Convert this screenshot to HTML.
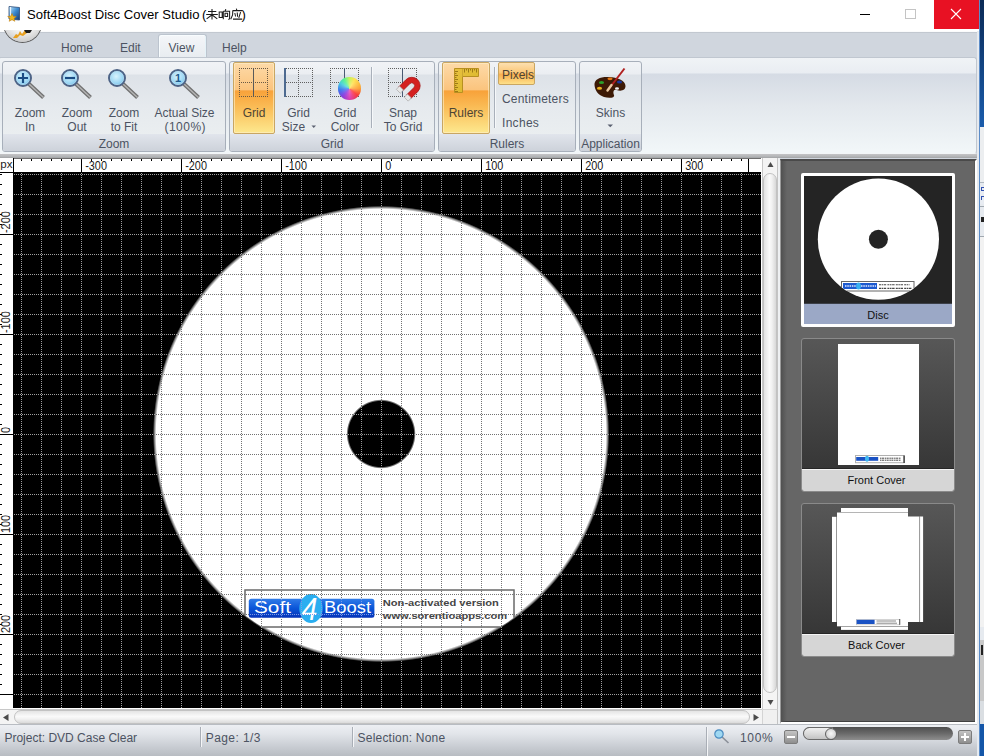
<!DOCTYPE html>
<html><head><meta charset="utf-8">
<style>
*{box-sizing:border-box;margin:0;padding:0}
html,body{width:984px;height:756px;overflow:hidden;background:#d0d6de}
body{position:relative;font-family:"Liberation Sans",sans-serif;font-size:12px;color:#4c5362}
.a{position:absolute}
.t{position:absolute;white-space:nowrap;line-height:14px;margin-top:1px}
</style></head><body>

<!-- right desktop strip -->
<div class="a" style="left:977px;top:0;width:7px;height:756px;background:#e6eaef"></div>
<div class="a" style="left:979px;top:0;width:1px;height:756px;background:#5b8cc8"></div>
<div class="a" style="left:980px;top:0;width:4px;height:127px;background:linear-gradient(#0b2a55,#1a5cac)"></div>
<div class="a" style="left:980px;top:127px;width:4px;height:55px;background:#eceef0"></div>
<div class="a" style="left:980px;top:182px;width:4px;height:1px;background:#b0b8c0"></div>
<div class="a" style="left:980px;top:186px;width:4px;height:18px;background:#e8ecf2;color:#2040a0"></div>
<div class="a" style="left:981px;top:187px;width:3px;height:4px;border:1px solid #3050b0;border-right:none;background:transparent"></div>
<div class="a" style="left:981px;top:196px;width:3px;height:4px;border-left:1px solid #3050b0;border-top:1px solid #3050b0"></div>
<div class="a" style="left:980px;top:206px;width:4px;height:1px;background:#a0a8b0"></div>
<div class="a" style="left:981px;top:217px;width:3px;height:5px;background:#222"></div>
<div class="a" style="left:980px;top:236px;width:4px;height:1px;background:#a0a8b0"></div>
<div class="a" style="left:980px;top:237px;width:4px;height:390px;background:#f2f2f2"></div>
<div class="a" style="left:980px;top:640px;width:4px;height:61px;background:#c8c8c8"></div>
<div class="a" style="left:981px;top:645px;width:2px;height:10px;background:#222"></div>
<div class="a" style="left:980px;top:701px;width:4px;height:23px;background:#dadee2"></div>
<div class="a" style="left:980px;top:724px;width:4px;height:32px;background:#1456a8"></div>
<!-- title bar -->
<div class="a" id="title" style="left:0;top:0;width:979px;height:31px;background:#fff"></div>
<div class="t" style="left:27px;top:6px;font-size:13.1px;color:#000;line-height:18px;margin:0">Soft4Boost Disc Cover Studio</div>
<div class="t" style="left:202px;top:6px;font-size:13.1px;color:#000;line-height:18px;margin:0">(</div>
<div class="t" style="left:241.5px;top:6px;font-size:13.1px;color:#000;line-height:18px;margin:0">)</div>
<div class="a" style="left:860px;top:14px;width:10px;height:1px;background:#000"></div>
<div class="a" style="left:905px;top:9px;width:11px;height:10px;border:1px solid #c4c4c4"></div>
<div class="a" style="left:934px;top:0;width:45px;height:29px;background:#e81123"></div>


<!-- tab row -->
<div class="a" style="left:0;top:31px;width:977px;height:26px;background:#d0d6de;border-top:1px solid #fafbfc;box-shadow:inset 0 1px 0 #c2c8d0"></div>
<!-- app orb (clipped by title) -->
<div class="a" style="left:0;top:29.5px;width:60px;height:16px;overflow:hidden">
 <div class="a" style="left:3.7px;top:-24.2px;width:37px;height:37px;border-radius:50%;background:radial-gradient(circle at 50% 30%,#ffffff 0%,#f6f6f6 45%,#d0d0d0 78%,#a0a0a0 100%);box-shadow:0 0 0 1px #5d5d5d"></div>
 <svg class="a" style="left:10px;top:0" width="24" height="9" viewBox="0 0 24 9">
  <path d="M3 8 L6 4 L8 5 L10 1 L12 4 L15 0 L17 3 L13 6 L10 5 L7 8 Z" fill="#e8a020"/>
  <path d="M14 0 H22 L20 3 H16 Z" fill="#1a1a1a"/>
 </svg>
</div>
<div class="a" style="left:158px;top:34px;width:49px;height:24px;border:1px solid #bcc4ce;border-bottom:none;border-radius:3px 3px 0 0;background:linear-gradient(#f4f6f9,#e8ecf0);box-shadow:inset 1px 1px 0 #f8fcfe,inset -1px 0 0 #e4f2f8"></div>
<div class="t" style="left:61px;top:40px">Home</div>
<div class="t" style="left:120px;top:40px">Edit</div>
<div class="t" style="left:168.5px;top:40px">View</div>
<div class="t" style="left:222px;top:40px">Help</div>

<!-- ribbon body -->
<div class="a" style="left:-2px;top:57px;width:979px;height:97px;border:1px solid #c0c7d0;border-bottom-color:#f2f5f7;border-radius:3px;background:linear-gradient(#f0f3f6 0,#e9edf2 15px,#d5dbe4 16px,#e3e8ed 48px,#f1f6f8 92px)"></div>
<div class="a" style="left:0;top:154px;width:977px;height:4px;background:linear-gradient(#c4c4c6,#b4b6b8 60%,#a0a2a4)"></div>
<div class="a" style="left:0;top:158px;width:761px;height:1px;background:#707070"></div>
<div class="a" style="left:2px;top:61px;width:224px;height:91px;border:1px solid #a7afba;border-radius:3px;overflow:hidden;background:linear-gradient(#f1f3f6 0,#ebeef2 12px,#dde2e8 13px,#e6eaee 45px,#eaeef0 73px)">
 <div class="a" style="left:0;bottom:0;width:100%;height:17px;background:linear-gradient(#e1e5ec,#cdd2da)"></div>
 <div class="t" style="left:0;width:100%;text-align:center;top:74px">Zoom</div>
</div>
<div class="a" style="left:229px;top:61px;width:206px;height:91px;border:1px solid #a7afba;border-radius:3px;overflow:hidden;background:linear-gradient(#f1f3f6 0,#ebeef2 12px,#dde2e8 13px,#e6eaee 45px,#eaeef0 73px)">
 <div class="a" style="left:0;bottom:0;width:100%;height:17px;background:linear-gradient(#e1e5ec,#cdd2da)"></div>
 <div class="t" style="left:0;width:100%;text-align:center;top:74px">Grid</div>
</div>
<div class="a" style="left:438px;top:61px;width:138px;height:91px;border:1px solid #a7afba;border-radius:3px;overflow:hidden;background:linear-gradient(#f1f3f6 0,#ebeef2 12px,#dde2e8 13px,#e6eaee 45px,#eaeef0 73px)">
 <div class="a" style="left:0;bottom:0;width:100%;height:17px;background:linear-gradient(#e1e5ec,#cdd2da)"></div>
 <div class="t" style="left:0;width:100%;text-align:center;top:74px">Rulers</div>
</div>
<div class="a" style="left:579px;top:61px;width:63px;height:91px;border:1px solid #a7afba;border-radius:3px;overflow:hidden;background:linear-gradient(#f1f3f6 0,#ebeef2 12px,#dde2e8 13px,#e6eaee 45px,#eaeef0 73px)">
 <div class="a" style="left:0;bottom:0;width:100%;height:17px;background:linear-gradient(#e1e5ec,#cdd2da)"></div>
 <div class="t" style="left:0;width:100%;text-align:center;top:74px">Application</div>
</div>


<!-- canvas -->
<svg class="a" style="left:13px;top:172px" width="748" height="536" viewBox="0 0 748 536">
 <defs>
  <pattern id="gp" width="20" height="20" patternUnits="userSpaceOnUse"><g fill="#a0a0a0" shape-rendering="crispEdges"><rect x="1" y="2" width="1" height="1"/><rect x="3" y="2" width="1" height="1"/><rect x="5" y="2" width="1" height="1"/><rect x="7" y="2" width="1" height="1"/><rect x="9" y="2" width="1" height="1"/><rect x="11" y="2" width="1" height="1"/><rect x="13" y="2" width="1" height="1"/><rect x="15" y="2" width="1" height="1"/><rect x="17" y="2" width="1" height="1"/><rect x="19" y="2" width="1" height="1"/><rect x="8" y="1" width="1" height="1"/><rect x="8" y="3" width="1" height="1"/><rect x="8" y="5" width="1" height="1"/><rect x="8" y="7" width="1" height="1"/><rect x="8" y="9" width="1" height="1"/><rect x="8" y="11" width="1" height="1"/><rect x="8" y="13" width="1" height="1"/><rect x="8" y="15" width="1" height="1"/><rect x="8" y="17" width="1" height="1"/><rect x="8" y="19" width="1" height="1"/></g></pattern>
  <pattern id="gd" width="20" height="20" patternUnits="userSpaceOnUse"><g fill="#727272" shape-rendering="crispEdges"><rect x="1" y="2" width="1" height="1"/><rect x="3" y="2" width="1" height="1"/><rect x="5" y="2" width="1" height="1"/><rect x="7" y="2" width="1" height="1"/><rect x="9" y="2" width="1" height="1"/><rect x="11" y="2" width="1" height="1"/><rect x="13" y="2" width="1" height="1"/><rect x="15" y="2" width="1" height="1"/><rect x="17" y="2" width="1" height="1"/><rect x="19" y="2" width="1" height="1"/><rect x="8" y="1" width="1" height="1"/><rect x="8" y="3" width="1" height="1"/><rect x="8" y="5" width="1" height="1"/><rect x="8" y="7" width="1" height="1"/><rect x="8" y="9" width="1" height="1"/><rect x="8" y="11" width="1" height="1"/><rect x="8" y="13" width="1" height="1"/><rect x="8" y="15" width="1" height="1"/><rect x="8" y="17" width="1" height="1"/><rect x="8" y="19" width="1" height="1"/></g></pattern>
  <pattern id="gb" width="20" height="20" patternUnits="userSpaceOnUse"><g fill="#7c9ae6" shape-rendering="crispEdges"><rect x="1" y="2" width="1" height="1"/><rect x="3" y="2" width="1" height="1"/><rect x="5" y="2" width="1" height="1"/><rect x="7" y="2" width="1" height="1"/><rect x="9" y="2" width="1" height="1"/><rect x="11" y="2" width="1" height="1"/><rect x="13" y="2" width="1" height="1"/><rect x="15" y="2" width="1" height="1"/><rect x="17" y="2" width="1" height="1"/><rect x="19" y="2" width="1" height="1"/><rect x="8" y="1" width="1" height="1"/><rect x="8" y="3" width="1" height="1"/><rect x="8" y="5" width="1" height="1"/><rect x="8" y="7" width="1" height="1"/><rect x="8" y="9" width="1" height="1"/><rect x="8" y="11" width="1" height="1"/><rect x="8" y="13" width="1" height="1"/><rect x="8" y="15" width="1" height="1"/><rect x="8" y="17" width="1" height="1"/><rect x="8" y="19" width="1" height="1"/></g></pattern>
  <clipPath id="ring"><path clip-rule="evenodd" d="M141.4 262 A226.7 226.7 0 1 0 594.8 262 A226.7 226.7 0 1 0 141.4 262 Z M334.5 262 A33.6 33.6 0 1 0 401.7 262 A33.6 33.6 0 1 0 334.5 262 Z"/></clipPath>
  <clipPath id="outside"><path clip-rule="evenodd" d="M0 0 H748 V536 H0 Z M141.4 262 A226.7 226.7 0 1 0 594.8 262 A226.7 226.7 0 1 0 141.4 262 Z M334.5 262 A33.6 33.6 0 1 0 401.7 262 A33.6 33.6 0 1 0 334.5 262 Z"/></clipPath>
  <clipPath id="bn"><rect x="235.8" y="426.8" width="125.6" height="19"/></clipPath>
  <clipPath id="dc"><circle cx="368.1" cy="262" r="226.7"/></clipPath>
  <linearGradient id="lb" x1="0" y1="0" x2="0" y2="1"><stop offset="0" stop-color="#2f7be8"/><stop offset="0.5" stop-color="#0a55d8"/><stop offset="1" stop-color="#0633b8"/></linearGradient>
 </defs>
 <rect width="748" height="536" fill="#000"/>
 <radialGradient id="dg" gradientUnits="userSpaceOnUse" cx="368.1" cy="262" r="228.2"><stop offset="0.9852" stop-color="#fff"/><stop offset="0.993" stop-color="#888"/><stop offset="1" stop-color="#000"/></radialGradient>
 <radialGradient id="hg" gradientUnits="userSpaceOnUse" cx="368.1" cy="262" r="34.7"><stop offset="0.94" stop-color="#000"/><stop offset="0.97" stop-color="#777"/><stop offset="1" stop-color="#fff"/></radialGradient>
 <circle cx="368.1" cy="262" r="228.2" fill="url(#dg)"/>
 <g clip-path="url(#dc)">
  <rect x="232" y="418" width="269" height="37" fill="#fff" stroke="#6a6a6a" stroke-width="1.5"/>
  <rect x="235.8" y="426.8" width="125.6" height="19" rx="2.5" fill="url(#lb)"/>
  <ellipse cx="298" cy="436.5" rx="11.7" ry="14.5" fill="#2aaef0"/>
  <text x="241" y="440.8" font-family="Liberation Sans" font-size="16.8" fill="#fff" textLength="37" lengthAdjust="spacingAndGlyphs">Soft</text>
  <text x="288.5" y="448.4" font-family="Liberation Sans" font-size="31" font-style="italic" fill="#fff" textLength="16" lengthAdjust="spacingAndGlyphs">4</text>
  <text x="311" y="440.8" font-family="Liberation Sans" font-size="16.8" fill="#fff" textLength="47" lengthAdjust="spacingAndGlyphs">Boost</text>
  <text x="369.8" y="433.9" font-family="Liberation Sans" font-size="9.6" font-weight="bold" fill="#444" textLength="116" lengthAdjust="spacingAndGlyphs">Non-activated version</text>
  <text x="369.8" y="447.4" font-family="Liberation Sans" font-size="9.6" font-weight="bold" fill="#444" textLength="124.3" lengthAdjust="spacingAndGlyphs">www.sorentioapps.com</text>
 </g>
 <circle cx="368.1" cy="262" r="34.7" fill="url(#hg)"/>
 <rect width="748" height="536" fill="url(#gp)" clip-path="url(#outside)"/>
 <rect width="748" height="536" fill="url(#gd)" clip-path="url(#ring)"/>
 <rect x="235" y="426" width="127" height="21" fill="url(#gb)" clip-path="url(#bn)"/>
</svg>
<svg class="a" style="left:0;top:159px" width="761" height="13" viewBox="0 0 761 13">
 <rect width="761" height="13" fill="#fff"/>
 <g fill="#000" shape-rendering="crispEdges"><rect x="21" y="0" width="1" height="2"/><rect x="31" y="0" width="1" height="2"/><rect x="41" y="0" width="1" height="2"/><rect x="51" y="0" width="1" height="2"/><rect x="61" y="0" width="1" height="2"/><rect x="71" y="0" width="1" height="2"/><rect x="81" y="0" width="1" height="13"/><rect x="91" y="0" width="1" height="2"/><rect x="101" y="0" width="1" height="2"/><rect x="111" y="0" width="1" height="2"/><rect x="121" y="0" width="1" height="2"/><rect x="131" y="0" width="1" height="2"/><rect x="141" y="0" width="1" height="2"/><rect x="151" y="0" width="1" height="2"/><rect x="161" y="0" width="1" height="2"/><rect x="171" y="0" width="1" height="2"/><rect x="181" y="0" width="1" height="13"/><rect x="191" y="0" width="1" height="2"/><rect x="201" y="0" width="1" height="2"/><rect x="211" y="0" width="1" height="2"/><rect x="221" y="0" width="1" height="2"/><rect x="231" y="0" width="1" height="2"/><rect x="241" y="0" width="1" height="2"/><rect x="251" y="0" width="1" height="2"/><rect x="261" y="0" width="1" height="2"/><rect x="271" y="0" width="1" height="2"/><rect x="281" y="0" width="1" height="13"/><rect x="291" y="0" width="1" height="2"/><rect x="301" y="0" width="1" height="2"/><rect x="311" y="0" width="1" height="2"/><rect x="321" y="0" width="1" height="2"/><rect x="331" y="0" width="1" height="2"/><rect x="341" y="0" width="1" height="2"/><rect x="351" y="0" width="1" height="2"/><rect x="361" y="0" width="1" height="2"/><rect x="371" y="0" width="1" height="2"/><rect x="381" y="0" width="1" height="13"/><rect x="391" y="0" width="1" height="2"/><rect x="401" y="0" width="1" height="2"/><rect x="411" y="0" width="1" height="2"/><rect x="421" y="0" width="1" height="2"/><rect x="431" y="0" width="1" height="2"/><rect x="441" y="0" width="1" height="2"/><rect x="451" y="0" width="1" height="2"/><rect x="461" y="0" width="1" height="2"/><rect x="471" y="0" width="1" height="2"/><rect x="481" y="0" width="1" height="13"/><rect x="491" y="0" width="1" height="2"/><rect x="501" y="0" width="1" height="2"/><rect x="511" y="0" width="1" height="2"/><rect x="521" y="0" width="1" height="2"/><rect x="531" y="0" width="1" height="2"/><rect x="541" y="0" width="1" height="2"/><rect x="551" y="0" width="1" height="2"/><rect x="561" y="0" width="1" height="2"/><rect x="571" y="0" width="1" height="2"/><rect x="581" y="0" width="1" height="13"/><rect x="591" y="0" width="1" height="2"/><rect x="601" y="0" width="1" height="2"/><rect x="611" y="0" width="1" height="2"/><rect x="621" y="0" width="1" height="2"/><rect x="631" y="0" width="1" height="2"/><rect x="641" y="0" width="1" height="2"/><rect x="651" y="0" width="1" height="2"/><rect x="661" y="0" width="1" height="2"/><rect x="671" y="0" width="1" height="2"/><rect x="681" y="0" width="1" height="13"/><rect x="691" y="0" width="1" height="2"/><rect x="701" y="0" width="1" height="2"/><rect x="711" y="0" width="1" height="2"/><rect x="721" y="0" width="1" height="2"/><rect x="731" y="0" width="1" height="2"/><rect x="741" y="0" width="1" height="2"/><rect x="748" y="0" width="1" height="13"/></g>
 <g font-family="Liberation Sans" font-size="12.5" fill="#1a1a1a"><text transform="translate(85.2,10.9) scale(0.87,1)">-300</text><text transform="translate(185.2,10.9) scale(0.87,1)">-200</text><text transform="translate(285.2,10.9) scale(0.87,1)">-100</text><text transform="translate(385.2,10.9) scale(0.87,1)">0</text><text transform="translate(485.2,10.9) scale(0.87,1)">100</text><text transform="translate(585.2,10.9) scale(0.87,1)">200</text><text transform="translate(685.2,10.9) scale(0.87,1)">300</text></g>
</svg><svg class="a" style="left:0;top:172px" width="13" height="536" viewBox="0 0 13 536">
 <rect width="13" height="536" fill="#fff"/>
 <g fill="#000" shape-rendering="crispEdges"><rect x="0" y="2" width="2" height="1"/><rect x="0" y="12" width="2" height="1"/><rect x="0" y="22" width="2" height="1"/><rect x="0" y="32" width="2" height="1"/><rect x="0" y="42" width="2" height="1"/><rect x="0" y="52" width="2" height="1"/><rect x="0" y="62" width="13" height="1"/><rect x="0" y="72" width="2" height="1"/><rect x="0" y="82" width="2" height="1"/><rect x="0" y="92" width="2" height="1"/><rect x="0" y="102" width="2" height="1"/><rect x="0" y="112" width="2" height="1"/><rect x="0" y="122" width="2" height="1"/><rect x="0" y="132" width="2" height="1"/><rect x="0" y="142" width="2" height="1"/><rect x="0" y="152" width="2" height="1"/><rect x="0" y="162" width="13" height="1"/><rect x="0" y="172" width="2" height="1"/><rect x="0" y="182" width="2" height="1"/><rect x="0" y="192" width="2" height="1"/><rect x="0" y="202" width="2" height="1"/><rect x="0" y="212" width="2" height="1"/><rect x="0" y="222" width="2" height="1"/><rect x="0" y="232" width="2" height="1"/><rect x="0" y="242" width="2" height="1"/><rect x="0" y="252" width="2" height="1"/><rect x="0" y="262" width="13" height="1"/><rect x="0" y="272" width="2" height="1"/><rect x="0" y="282" width="2" height="1"/><rect x="0" y="292" width="2" height="1"/><rect x="0" y="302" width="2" height="1"/><rect x="0" y="312" width="2" height="1"/><rect x="0" y="322" width="2" height="1"/><rect x="0" y="332" width="2" height="1"/><rect x="0" y="342" width="2" height="1"/><rect x="0" y="352" width="2" height="1"/><rect x="0" y="362" width="13" height="1"/><rect x="0" y="372" width="2" height="1"/><rect x="0" y="382" width="2" height="1"/><rect x="0" y="392" width="2" height="1"/><rect x="0" y="402" width="2" height="1"/><rect x="0" y="412" width="2" height="1"/><rect x="0" y="422" width="2" height="1"/><rect x="0" y="432" width="2" height="1"/><rect x="0" y="442" width="2" height="1"/><rect x="0" y="452" width="2" height="1"/><rect x="0" y="462" width="13" height="1"/><rect x="0" y="472" width="2" height="1"/><rect x="0" y="482" width="2" height="1"/><rect x="0" y="492" width="2" height="1"/><rect x="0" y="502" width="2" height="1"/><rect x="0" y="512" width="2" height="1"/><rect x="0" y="522" width="2" height="1"/><rect x="0" y="522" width="13" height="1"/></g>
 <g font-family="Liberation Sans" font-size="12.5" fill="#1a1a1a"><text transform="translate(10.2,61) rotate(-90) scale(0.87,1)">-200</text><text transform="translate(10.2,161) rotate(-90) scale(0.87,1)">-100</text><text transform="translate(10.2,261) rotate(-90) scale(0.87,1)">0</text><text transform="translate(10.2,361) rotate(-90) scale(0.87,1)">100</text><text transform="translate(10.2,461) rotate(-90) scale(0.87,1)">200</text></g>
</svg>
<div class="a" style="left:0;top:158px;width:14px;height:15px;background:#fff;border-right:1px solid #000;border-bottom:1px solid #000"></div>
<div class="t" style="left:0.3px;top:156px;font-size:11.5px;color:#222;line-height:14px">px</div>


<!-- vertical scrollbar -->
<div class="a" style="left:761px;top:158px;width:17px;height:551px;background:#f4f4f4;border-left:1px solid #ffffff;border-right:1px solid #c4c4c4;box-shadow:inset 1px 0 0 #c8c8c8"></div>
<div class="a" style="left:763px;top:173px;width:14px;height:520px;border-radius:7px;border:1px solid #c2c2c2;background:linear-gradient(90deg,#e2e2e2,#fafafa 45%,#f2f2f2 65%,#d8d8d8)"></div>
<svg class="a" style="left:765px;top:161px" width="11" height="8"><path d="M2.5 6 L5.5 1 L8.5 6 Z" fill="#4a4a4a"/></svg>
<svg class="a" style="left:765px;top:699px" width="11" height="8"><path d="M2.5 1 L5.5 6 L8.5 1 Z" fill="#4a4a4a"/></svg>
<!-- horizontal scrollbar -->
<div class="a" style="left:0;top:708px;width:762px;height:17px;background:#f4f4f4;border-top:1px solid #ffffff;border-bottom:1px solid #b8b8b8;box-shadow:inset 0 1px 0 #c8c8c8"></div>
<div class="a" style="left:14px;top:710px;width:736px;height:14px;border-radius:7px;border:1px solid #c2c2c2;background:linear-gradient(#e4e4e4,#fafafa 45%,#f2f2f2 65%,#dadada)"></div>
<svg class="a" style="left:2px;top:712px" width="8" height="11"><path d="M6.5 2 L1 5.5 L6.5 9 Z" fill="#4a4a4a"/></svg>
<svg class="a" style="left:752px;top:712px" width="8" height="11"><path d="M1.5 2 L7 5.5 L1.5 9 Z" fill="#4a4a4a"/></svg>
<div class="a" style="left:762px;top:709px;width:16px;height:16px;background:#f0f0f0;border:1px solid #d4d4d4;border-right-color:#c4c4c4"></div>
<!-- gap -->
<div class="a" style="left:778px;top:158px;width:2px;height:567px;background:#eef0f2"></div>
<!-- right panel -->
<div class="a" style="left:780px;top:159px;width:197px;height:565px;background:#666;border-left:1px solid #9a9a9a;border-top:2px solid #4a4a4a;border-right:2px solid #fff;border-bottom:2px solid #fff;box-shadow:inset 0 -1px 0 #404040, inset -1px 0 0 #5a5a5a"></div>
<div class="a" style="left:781px;top:161px;width:6px;height:561px;background:linear-gradient(90deg,#505050,rgba(102,102,102,0))"></div>
<!-- status bar -->
<div class="a" style="left:0;top:724px;width:977px;height:32px;background:linear-gradient(#eef0f4 0,#e2e5ea 30%,#c8ccd2 72%,#b8bcc2)"></div>
<div class="a" style="left:0;top:724px;width:977px;height:1px;background:#b8bcc2"></div>
<div class="a" style="left:200px;top:727px;width:1px;height:20px;background:#a9aeb6;box-shadow:1px 0 0 #f4f5f7"></div>
<div class="a" style="left:352px;top:727px;width:1px;height:20px;background:#a9aeb6;box-shadow:1px 0 0 #f4f5f7"></div>
<div class="a" style="left:706px;top:727px;width:1px;height:29px;background:#a9aeb6;box-shadow:1px 0 0 #f4f5f7"></div>
<div class="t" style="left:4.4px;top:730px">Project: DVD Case Clear</div>
<div class="t" style="left:205.8px;top:730px;letter-spacing:0.4px">Page: 1/3</div>
<div class="t" style="left:357.6px;top:730px;letter-spacing:0.2px">Selection: None</div>
<div class="t" style="left:740px;top:730px;letter-spacing:0.7px">100%</div>


<!-- right panel cards -->
<div class="a" style="left:801px;top:173px;width:154px;height:154px;background:#fff;border-radius:2px"></div>
<svg class="a" style="left:804px;top:176px" width="148" height="128" viewBox="804 176 148 128">
 <rect x="804" y="176" width="148" height="128" fill="#242424"/>
 <defs><clipPath id="tc"><circle cx="878.4" cy="239.2" r="60.6"/></clipPath></defs>
 <circle cx="878.4" cy="239.2" r="60.6" fill="#fff"/>
 <circle cx="878.4" cy="239.2" r="9.5" fill="#242424"/>
 <g clip-path="url(#tc)">
  <rect x="841.5" y="281.5" width="72.5" height="9.5" fill="#fff" stroke="#666" stroke-width="1"/>
  <rect x="843" y="283" width="34" height="6" fill="#1d5ad0"/>
  <ellipse cx="858.5" cy="286" rx="2.4" ry="3.6" fill="#3ab0f0"/>
  <g stroke="#dfe8ff" stroke-width="1.3" stroke-dasharray="1.5 0.8"><path d="M845 286 H856 M861 286 H876"/></g>
  <g stroke="#444" stroke-width="1.1" stroke-dasharray="2 0.6 1.5 0.6 2.5 1.2"><path d="M879 284.8 H909.5 M879 288.4 H912"/></g>
 </g>
</svg>
<div class="a" style="left:804px;top:303px;width:148px;height:21px;background:#9ba8c6;border-top:1px solid #3c4048"></div>
<div class="t" style="left:804px;top:307px;width:148px;text-align:center;color:#111;font-size:11px">Disc</div>

<div class="a" style="left:801px;top:338px;width:154px;height:154px;border:1px solid #8a8a8a;border-radius:3px;overflow:hidden;background:linear-gradient(#575757,#333 95%)">
 <div class="a" style="left:35.5px;top:4.5px;width:81.5px;height:121.3px;background:#fff">
  <svg class="a" style="left:17.5px;top:111.5px" width="50" height="9" viewBox="0 0 50 9">
   <rect x="0.5" y="0.5" width="48.5" height="7.2" fill="#fff" stroke="#b0b0b0" stroke-width="1"/>
   <rect x="48.5" y="0.5" width="1.2" height="7.5" fill="#222"/>
   <rect x="1.2" y="2" width="22" height="3.8" fill="#1a52c4"/>
   <ellipse cx="12" cy="3.8" rx="2" ry="3" fill="#40b8f0"/>
   <g stroke="#333" stroke-width="0.9" stroke-dasharray="1.5 0.5 2 0.7"><path d="M25 3.2 H46 M25 5.2 H46"/></g>
  </svg>
 </div>
 <div class="a" style="left:0;top:129px;width:100%;height:25px;background:#d6d6d6;border-top:1px solid #262626;box-shadow:inset 0 1px 0 #f4f4f4"></div>
</div>
<div class="t" style="left:799.5px;top:472px;width:154px;text-align:center;color:#111;font-size:11px">Front Cover</div>

<div class="a" style="left:801px;top:503px;width:154px;height:154px;border:1px solid #8a8a8a;border-radius:3px;overflow:hidden;background:linear-gradient(#575757,#333 95%)">
 <svg class="a" style="left:-1px;top:-1px" width="154" height="154" viewBox="801 503 154 154">
  <g fill="#fff">
   <rect x="837" y="512.5" width="71" height="113.5"/>
   <rect x="908" y="516.5" width="11.3" height="105.5"/>
   <rect x="920" y="516.5" width="3.1" height="105.5"/>
   <rect x="832" y="516.8" width="4.2" height="105.2"/>
   <rect x="841" y="508" width="67" height="4.5"/>
   <rect x="841" y="626.5" width="67" height="3.4"/>
  </g>
  <g fill="#a8a8a8">
   <rect x="919.3" y="516.5" width="0.8" height="105.5"/>
   <rect x="836.2" y="516.8" width="0.7" height="105.2"/>
   <rect x="837" y="512.2" width="71" height="0.7"/>
   <rect x="837" y="626" width="71" height="0.6"/>
  </g>
  <rect x="856.3" y="619.3" width="43.5" height="5.5" fill="#fff" stroke="#b8b8b8" stroke-width="0.6"/>
  <rect x="856.6" y="619.8" width="18" height="4.2" fill="#1a52c4"/>
  <rect x="899.3" y="619" width="0.9" height="5.8" fill="#444"/>
  <g stroke="#555" stroke-width="0.7"><path d="M876.5 621 H896 M876.5 623.2 H897"/></g>
 </svg>
 <div class="a" style="left:0;top:129px;width:100%;height:25px;background:#d6d6d6;border-top:1px solid #262626;box-shadow:inset 0 1px 0 #f4f4f4"></div>
</div>
<div class="t" style="left:799.5px;top:637px;width:154px;text-align:center;color:#111;font-size:11px">Back Cover</div>


<!-- zoom group buttons -->
<svg class="a" style="left:13px;top:68px" width="34" height="34" viewBox="0 0 34 34">
 <defs><radialGradient id="lg13" cx="0.45" cy="0.4" r="0.6"><stop offset="0" stop-color="#d8f3fd"/><stop offset="0.7" stop-color="#9ad6f4"/><stop offset="1" stop-color="#6cb6e4"/></radialGradient></defs>
 <line x1="15.5" y1="15.5" x2="30.5" y2="29.5" stroke="#707070" stroke-width="4"/>
 <line x1="15.5" y1="15.5" x2="30.5" y2="29.5" stroke="#b4b4b4" stroke-width="1.5"/>
 <circle cx="10" cy="10" r="8" fill="url(#lg13)" stroke="#4d6386" stroke-width="2"/>
 <circle cx="10" cy="10" r="6.6" fill="none" stroke="#b9dcf0" stroke-width="0.8" opacity="0.8"/>
 <path d="M5 10 H15 M10 5 V15" stroke="#1a4c84" stroke-width="2.2"/>
</svg>
<svg class="a" style="left:60px;top:68px" width="34" height="34" viewBox="0 0 34 34">
 <defs><radialGradient id="lg60" cx="0.45" cy="0.4" r="0.6"><stop offset="0" stop-color="#d8f3fd"/><stop offset="0.7" stop-color="#9ad6f4"/><stop offset="1" stop-color="#6cb6e4"/></radialGradient></defs>
 <line x1="15.5" y1="15.5" x2="30.5" y2="29.5" stroke="#707070" stroke-width="4"/>
 <line x1="15.5" y1="15.5" x2="30.5" y2="29.5" stroke="#b4b4b4" stroke-width="1.5"/>
 <circle cx="10" cy="10" r="8" fill="url(#lg60)" stroke="#4d6386" stroke-width="2"/>
 <circle cx="10" cy="10" r="6.6" fill="none" stroke="#b9dcf0" stroke-width="0.8" opacity="0.8"/>
 <path d="M5 10 H15" stroke="#1a4c84" stroke-width="2.2"/>
</svg>
<svg class="a" style="left:107px;top:68px" width="34" height="34" viewBox="0 0 34 34">
 <defs><radialGradient id="lg107" cx="0.45" cy="0.4" r="0.6"><stop offset="0" stop-color="#d8f3fd"/><stop offset="0.7" stop-color="#9ad6f4"/><stop offset="1" stop-color="#6cb6e4"/></radialGradient></defs>
 <line x1="15.5" y1="15.5" x2="30.5" y2="29.5" stroke="#707070" stroke-width="4"/>
 <line x1="15.5" y1="15.5" x2="30.5" y2="29.5" stroke="#b4b4b4" stroke-width="1.5"/>
 <circle cx="10" cy="10" r="8" fill="url(#lg107)" stroke="#4d6386" stroke-width="2"/>
 <circle cx="10" cy="10" r="6.6" fill="none" stroke="#b9dcf0" stroke-width="0.8" opacity="0.8"/>
 
</svg>
<svg class="a" style="left:168px;top:68px" width="34" height="34" viewBox="0 0 34 34">
 <defs><radialGradient id="lg168" cx="0.45" cy="0.4" r="0.6"><stop offset="0" stop-color="#d8f3fd"/><stop offset="0.7" stop-color="#9ad6f4"/><stop offset="1" stop-color="#6cb6e4"/></radialGradient></defs>
 <line x1="15.5" y1="15.5" x2="30.5" y2="29.5" stroke="#707070" stroke-width="4"/>
 <line x1="15.5" y1="15.5" x2="30.5" y2="29.5" stroke="#b4b4b4" stroke-width="1.5"/>
 <circle cx="10" cy="10" r="8" fill="url(#lg168)" stroke="#4d6386" stroke-width="2"/>
 <circle cx="10" cy="10" r="6.6" fill="none" stroke="#b9dcf0" stroke-width="0.8" opacity="0.8"/>
 <text x="10" y="14.2" text-anchor="middle" font-family="Liberation Sans" font-weight="bold" font-size="11" fill="#1f5a8c">1</text>
</svg>
<div class="t" style="left:3px;width:54px;text-align:center;top:105px">Zoom<br>In</div>
<div class="t" style="left:50px;width:54px;text-align:center;top:105px">Zoom<br>Out</div>
<div class="t" style="left:97px;width:54px;text-align:center;top:105px">Zoom<br>to Fit</div>
<div class="t" style="left:149.5px;width:70px;text-align:center;top:105px">Actual Size<br><span style="letter-spacing:0.5px;margin-left:1.5px">(100%)</span></div>

<!-- grid group -->
<div class="a" style="left:233px;top:62px;width:42px;height:72px;background:linear-gradient(#fddaa8 0%,#fbc47e 38%,#f8a23a 40%,#fabb55 62%,#fde88e 100%);border:1px solid #c9a662;border-radius:2px;box-shadow:inset 0 0 0 1px rgba(255,240,200,0.6)"></div>
<svg class="a" style="left:230px;top:60px" width="210" height="44" viewBox="230 60 210 44">
 <g stroke="#6a5a44" stroke-width="1" stroke-dasharray="1 1" fill="none" shape-rendering="crispEdges"><path d="M239 68.5 H268 M239 96.5 H268 M239 82.5 H268 M239.5 68 V97 M267.5 68 V97"/></g>
 <rect x="253" y="68" width="1" height="29" fill="#5a5a5a" shape-rendering="crispEdges"/>
 <g stroke="#5e5e5e" stroke-width="1" stroke-dasharray="1 1" fill="none" shape-rendering="crispEdges"><path d="M284 68.5 H313 M284 96.5 H313 M284 82.5 H313 M284.5 68 V97 M312.5 68 V97"/></g>
 <path d="M298.5 68 V97" stroke="#5e5e5e" stroke-width="1" stroke-dasharray="1 1" shape-rendering="crispEdges"/>
 <rect x="284" y="68" width="2" height="29" fill="#4d6a90" shape-rendering="crispEdges"/>
 <g stroke="#5e5e5e" stroke-width="1" stroke-dasharray="1 1" fill="none" shape-rendering="crispEdges"><path d="M330 68.5 H359 M330 96.5 H359 M330 82.5 H359 M330.5 68 V97 M358.5 68 V97"/></g>
 <rect x="344" y="68" width="1" height="14" fill="#4a5a72" shape-rendering="crispEdges"/>
 <g stroke="#5e5e5e" stroke-width="1" stroke-dasharray="1 1" fill="none" shape-rendering="crispEdges"><path d="M388 68.5 H417 M388 96.5 H417 M388 82.5 H417 M388.5 68 V97 M416.5 68 V97"/></g>
 <rect x="402" y="68" width="1" height="29" fill="#4a5a72" shape-rendering="crispEdges"/>
</svg>
<div class="a" style="left:338.4px;top:77px;width:22.6px;height:22.6px;border-radius:50%;background:conic-gradient(#c0f040 0deg,#ffe040 30deg,#ffa030 90deg,#ff3838 130deg,#e040b8 180deg,#8838e0 220deg,#2c6cf0 262deg,#30c8d8 300deg,#40f080 330deg,#c0f040 360deg)"></div>
<div class="a" style="left:338.4px;top:77px;width:22.6px;height:22.6px;border-radius:50%;background:radial-gradient(circle at 45% 38%,rgba(255,255,255,0.35),rgba(255,255,255,0.1) 45%,rgba(0,0,0,0.04) 75%,rgba(0,0,0,0.28))"></div>
<svg class="a" style="left:394px;top:76px;overflow:visible" width="28" height="26" viewBox="0 0 28 26">
 <g transform="translate(17 10.5) scale(1.12) translate(-14 -12) rotate(-135 14 12)">
  <path d="M6.5 4 V13 A7.5 7.5 0 0 0 21.5 13 V4 H16.5 V13 A2.5 2.5 0 0 1 11.5 13 V4 Z" fill="#d42020" stroke="#a01010" stroke-width="0.6"/>
  <rect x="6.5" y="1" width="5" height="4" fill="#e8e8e8" stroke="#999" stroke-width="0.5"/>
  <rect x="16.5" y="1" width="5" height="4" fill="#e8e8e8" stroke="#999" stroke-width="0.5"/>
 </g>
</svg>
<div class="a" style="left:371px;top:67px;width:1px;height:61px;background:#a9b0ba;box-shadow:1px 0 0 #f6f8fa"></div>
<div class="t" style="left:233px;width:42px;text-align:center;top:105px;color:#4d4434">Grid</div>
<div class="t" style="left:271.5px;width:54px;text-align:center;top:105px">Grid<br>Size &nbsp;&nbsp;</div>
<svg class="a" style="left:311px;top:125px" width="6" height="4"><path d="M0.5 0.5 H5 L2.75 3 Z" fill="#5a6070"/></svg>
<div class="t" style="left:318px;width:54px;text-align:center;top:105px">Grid<br>Color</div>
<div class="t" style="left:373px;width:60px;text-align:center;top:105px">Snap<br>To Grid</div>

<!-- rulers group -->
<div class="a" style="left:442px;top:62px;width:48px;height:72px;background:linear-gradient(#fddaa8 0%,#fbc47e 38%,#f8a23a 40%,#fabb55 62%,#fde88e 100%);border:1px solid #c9a662;border-radius:2px;box-shadow:inset 0 0 0 1px rgba(255,240,200,0.6)"></div>
<div class="a" style="left:498px;top:62px;width:37px;height:23px;background:linear-gradient(#fde0b0,#fbc778 45%,#f9b050 55%,#fde08a);border:1px solid #c9a662;border-radius:2px"></div>
<svg class="a" style="left:454px;top:68px" width="26" height="25" viewBox="0 0 26 25">
 <defs><linearGradient id="rg" x1="0" y1="0" x2="1" y2="1"><stop offset="0" stop-color="#e8c040"/><stop offset="1" stop-color="#d8b828"/></linearGradient></defs>
 <path d="M0.5 0.5 H24.5 V8.5 H8.5 V24.5 H0.5 Z" fill="url(#rg)" stroke="#b89020" stroke-width="1"/>
 <path d="M8.5 1 V8.5" stroke="#c8a030" stroke-width="0.8"/>
 <g stroke="#8a6810" stroke-width="0.8" fill="none"><path d="M1 3.5 H4M1 5.5 H2.5M1 7.5 H4M1 9.5 H2.5M1 11.5 H4M1 13.5 H2.5M1 15.5 H4M1 17.5 H2.5M1 19.5 H4M1 21.5 H2.5M1 23.5 H4M10.5 1 V4.5M12.5 1 V2.5M14.5 1 V4.5M16.5 1 V2.5M18.5 1 V4.5M20.5 1 V2.5M22.5 1 V4.5"/></g>
</svg>
<div class="a" style="left:494px;top:67px;width:1px;height:61px;background:#a9b0ba;box-shadow:1px 0 0 #f6f8fa"></div>
<div class="t" style="left:442px;width:48px;text-align:center;top:105px;color:#4d4434">Rulers</div>
<div class="t" style="left:502px;top:66.8px;color:#4d4434">Pixels</div>
<div class="t" style="left:502px;top:90.6px;letter-spacing:0.2px">Centimeters</div>
<div class="t" style="left:502px;top:114.8px;letter-spacing:0.3px">Inches</div>

<!-- application group -->
<svg class="a" style="left:592px;top:66px" width="36" height="34" viewBox="0 0 36 34">
 <path d="M2.5 19 C2 13 9 10.5 17 11 C25 11.5 33.5 14 33.5 20 C33.5 24.5 29 25.5 24.5 24 C21 23 21 27 22 29 C23 32 17 32.5 12 31 C6 29 2.8 24 2.5 19 Z" fill="#3d1a06"/>
 <ellipse cx="9.5" cy="16.5" rx="2.6" ry="1.5" fill="#2aa02a"/>
 <ellipse cx="18" cy="12.8" rx="2.6" ry="1.4" fill="#e07818"/>
 <ellipse cx="7.5" cy="22.3" rx="2.6" ry="1.5" fill="#e8b020"/>
 <ellipse cx="27.5" cy="16" rx="2.6" ry="1.5" fill="#1838a0"/>
 <ellipse cx="25" cy="22.5" rx="2" ry="1.2" fill="#f4f4f4"/>
 <path d="M16 24 L32.5 2.5" stroke="#b02020" stroke-width="2"/>
 <path d="M15.5 24.5 L19.5 19" stroke="#e8c8a0" stroke-width="2.4" stroke-linecap="round"/>
</svg>
<div class="t" style="left:579px;width:63px;text-align:center;top:105px">Skins</div>
<svg class="a" style="left:607px;top:124px" width="7" height="4"><path d="M0.5 0.5 H6 L3.25 3.2 Z" fill="#5a6070"/></svg>


<!-- title extras -->
<svg class="a" style="left:5px;top:4px" width="18" height="20" viewBox="5 4 18 20">
 <defs><linearGradient id="ai" x1="0" y1="0" x2="1" y2="1"><stop offset="0" stop-color="#c8e8f8"/><stop offset="0.5" stop-color="#3a8ad0"/><stop offset="1" stop-color="#1a3a70"/></linearGradient></defs>
 <path d="M9 6.5 L19.5 7.5 L19.5 20 L9 19 Z" fill="url(#ai)" stroke="#2a4a78" stroke-width="0.8"/>
 <path d="M10.5 7 L10.5 19" stroke="#e8f4fc" stroke-width="1.2"/>
 <path d="M12 13.5 L13.3 16.3 L16.3 16.5 L14 18.4 L14.8 21.3 L12 19.7 L9.2 21.3 L10 18.4 L7.7 16.5 L10.7 16.3 Z" fill="#f0b820" stroke="#c08010" stroke-width="0.6"/>
</svg>
<svg class="a" style="left:205px;top:7px" width="40" height="15" viewBox="205 7 40 15">
 <g stroke="#1a1a1a" stroke-width="1.05" fill="none" shape-rendering="geometricPrecision">
  <path d="M208 11.5 H216.3 M206.2 14.5 H217.8 M212 9 V19.5 M211.8 15 L206.6 18.8 M212.2 15 L217.3 18.8"/>
  <path d="M219.2 12 H222.2 V17.5 H219.2 Z M225.8 9.2 L225.2 11 M223.3 11.3 H229.6 V19 M223.3 11.3 V19.3 M225 13.2 H227.6 V16.5 H225 Z M229.6 19.2 H228.2"/>
  <path d="M236.3 8.6 L236.8 10.2 M232.6 10.6 H242.2 M232.8 10.6 L232.6 15 L230.7 19.3 M234.8 13 L235.6 16.5 M237.2 12.5 L237.6 16.8 M240.6 12.2 L238.8 17.8 M233 19.1 H242.2"/>
 </g>
</svg>
<svg class="a" style="left:950px;top:8px" width="12" height="12" viewBox="0 0 12 12"><path d="M1 1 L11 11 M11 1 L1 11" stroke="#fff" stroke-width="1.1"/></svg>

<!-- status zoom controls -->
<svg class="a" style="left:713.2px;top:728.2px" width="18" height="17" viewBox="0 0 18 17">
 <line x1="7.5" y1="7.5" x2="15.5" y2="15" stroke="#8a8f98" stroke-width="1.6"/>
 <circle cx="6" cy="6" r="4.2" fill="#9fd8f2" stroke="#4c8cc0" stroke-width="1.2"/>
</svg>
<div class="a" style="left:784px;top:730px;width:14px;height:14px;border:1px solid #7c7c7c;border-radius:2px;background:linear-gradient(#c4c4c4,#8e8e8e)"><div class="a" style="left:2px;top:5px;width:8px;height:2px;background:#fff"></div></div>
<div class="a" style="left:958px;top:730px;width:14px;height:14px;border:1px solid #7c7c7c;border-radius:2px;background:linear-gradient(#c4c4c4,#8e8e8e)"><div class="a" style="left:2px;top:5px;width:8px;height:2px;background:#fff"></div><div class="a" style="left:5px;top:2px;width:2px;height:8px;background:#fff"></div></div>
<div class="a" style="left:803px;top:727px;width:150px;height:13px;border-radius:6.5px;background:linear-gradient(#4e4e4e,#6a6a6a 50%,#8e8e8e);overflow:hidden">
 <div class="a" style="left:0;top:0;width:30px;height:13px;border-radius:6.5px 0 0 6.5px;background:linear-gradient(#f0f0f0,#d6d6d6 60%,#c2c2c2);border:1px solid #6a6a6a;border-right:none"></div>
</div>
<div class="a" style="left:824.5px;top:728px;width:12px;height:12px;border-radius:50%;background:radial-gradient(circle at 50% 45%,#f8f8f8,#d8d8d8 60%,#b0b0b0);border:1px solid #606060"></div>

</body></html>
